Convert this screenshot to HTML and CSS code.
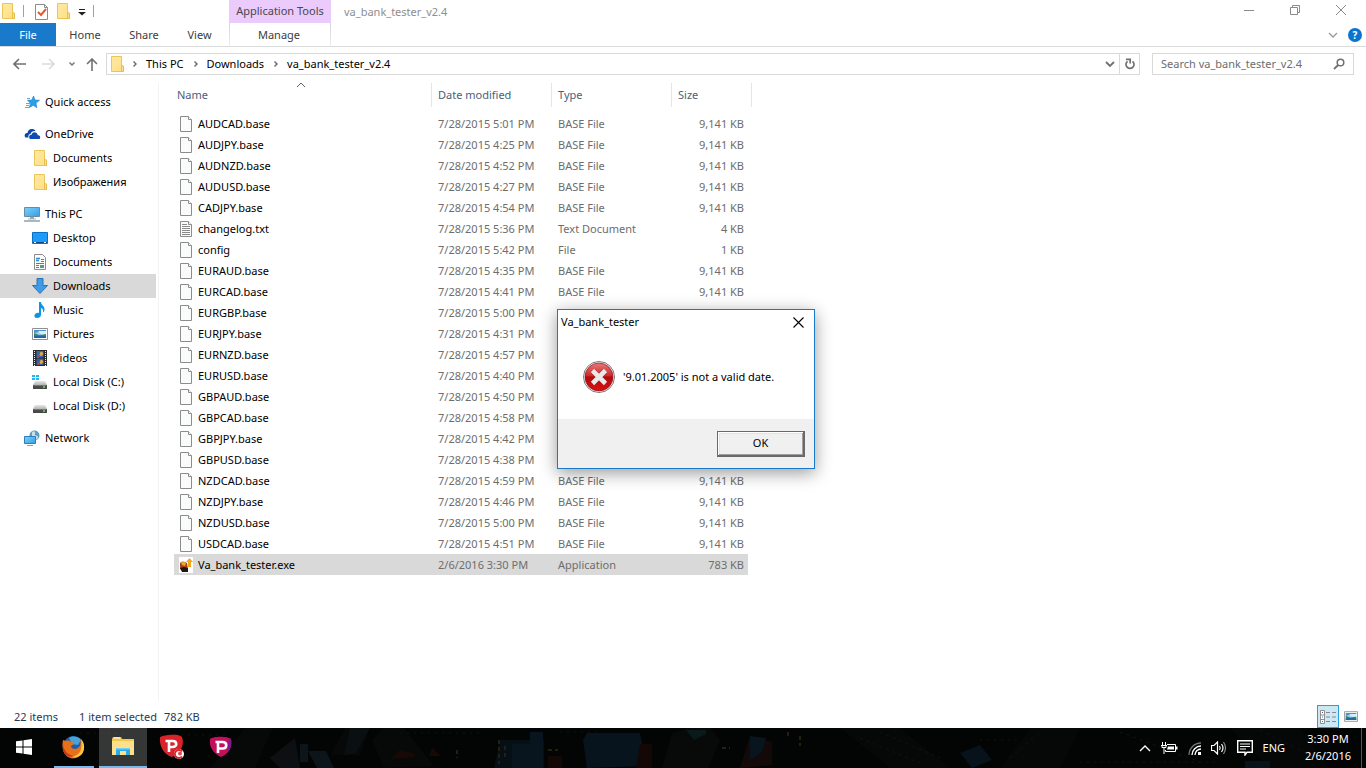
FILE: index.html
```html
<!DOCTYPE html>
<html lang="en">
<head>
<meta charset="utf-8">
<title>va_bank_tester_v2.4</title>
<link rel="stylesheet" href="styles.css">
</head>
<body>
<svg class="defs" aria-hidden="true">
  <defs>
    <linearGradient id="g-folder" x1="0" y1="0" x2="1" y2="1"><stop offset="0" stop-color="#ffe9a2"/><stop offset="1" stop-color="#ffdf85"/></linearGradient>
    <linearGradient id="g-screen" x1="0" y1="0" x2="1" y2="1"><stop offset="0" stop-color="#7fd0fb"/><stop offset="1" stop-color="#2f9fe6"/></linearGradient>
    <linearGradient id="g-red" x1="0" y1="0" x2="0" y2="1"><stop offset="0" stop-color="#e8797a"/><stop offset=".45" stop-color="#cf2a2c"/><stop offset=".5" stop-color="#b00b0e"/><stop offset="1" stop-color="#dd1114"/></linearGradient>
    <linearGradient id="g-disk" x1="0" y1="0" x2="0" y2="1"><stop offset="0" stop-color="#e6e6e6"/><stop offset="1" stop-color="#b5b5b5"/></linearGradient>
  </defs>
  <symbol id="folder" viewBox="0 0 16 18"><path d="M2.500 1.500h10v10h2v5h-12z" fill="url(#g-folder)" stroke="#eac65a"/><path d="M12.500 16.500v-5l1.500-1 .5 1v5z" fill="#ffe08a" stroke="#e5bd48"/></symbol>
  <symbol id="file" viewBox="0 0 14 16"><path d="M1.500.5h8l3 3v12h-11z" fill="#fafbfb" stroke="#8c8c8c"/><path d="M9.500.5v3h3" fill="#fff" stroke="#8c8c8c"/></symbol>
  <symbol id="textfile" viewBox="0 0 14 16"><path d="M1.500.5h8l3 3v12h-11z" fill="#fafbfb" stroke="#8c8c8c"/><path d="M3 3.500h5M3 5.500h8M3 7.500h8M3 9.500h8M3 11.500h8M3 13.500h8" stroke="#8a8a8a" fill="none"/><path d="M9.500.5v3h3" fill="#fff" stroke="#8c8c8c"/></symbol>
  <symbol id="chev" viewBox="0 0 6 8"><path d="M1.500 1.500L4 4 1.500 6.500" fill="none" stroke="#666" stroke-width="1.400"/></symbol>
  <symbol id="picture" viewBox="0 0 16 12"><path d="M.5.5h15v11H.5z" fill="#fff" stroke="#8f8f8f"/><path d="M2 2h12v8H2z" fill="#9fd4f5"/><path d="M2 2h12v1l-7 1-5 1z" fill="#4b8fd6"/><path d="M2 5l5 2 7-1v4H2z" fill="#3d8263"/><path d="M2 8h12v2H2z" fill="#1f69a8"/><path d="M6 3h8v3l-5 .5z" fill="#d8eefb"/></symbol>
  <symbol id="disk" viewBox="0 0 16 16"><path d="M3 7h10l2 4H1z" fill="url(#g-disk)"/><path d="M1 11h14v4H1z" fill="#4a4a4a"/><path d="M1.500 11.500h13" stroke="#777"/><circle cx="12" cy="13" r="1" fill="#6ee36a"/></symbol>
</svg>

<div class="window">
  <header class="titlebar">
    <div class="quick">
      <svg width="16" height="18"><use href="#folder"/></svg>
      <span class="vbar"></span>
      <button class="plain props" aria-label="Properties"><svg width="13" height="16" viewBox="0 0 13 16"><path d="M.5.5h9l3 3v12H.5z" fill="#fff" stroke="#8c8c8c"/><path d="M9.500.5v3h3" fill="none" stroke="#8c8c8c"/><path d="M3 8l3 3 5-6" fill="none" stroke="#e8592a" stroke-width="2"/></svg></button>
      <button class="plain" aria-label="New folder"><svg width="16" height="18"><use href="#folder"/></svg></button>
      <button class="plain custom" aria-label="Customize toolbar"><svg width="8" height="8" viewBox="0 0 8 8"><path d="M1 1.500h6" stroke="#222"/><path d="M0 4h8L4 7.500z" fill="#222"/></svg></button>
      <span class="vbar"></span>
    </div>
    <div class="context">Application Tools</div>
    <div class="title">va_bank_tester_v2.4</div>
    <div class="controls">
      <button class="plain" aria-label="Minimize"><svg width="10" height="10" viewBox="0 0 10 10"><path d="M0 5.500h10" stroke="#8a8a8a"/></svg></button>
      <button class="plain" aria-label="Restore"><svg width="10" height="10" viewBox="0 0 10 10"><path d="M.5 2.500h7v7h-7zM2.500 2.500v-2h7v7h-2" fill="none" stroke="#8a8a8a"/></svg></button>
      <button class="plain" aria-label="Close"><svg width="10" height="10" viewBox="0 0 10 10"><path d="M0 0l10 10M10 0L0 10" stroke="#8a8a8a"/></svg></button>
    </div>
  </header>

  <nav class="ribbon">
    <button class="tab file">File</button>
    <button class="tab home">Home</button>
    <button class="tab">Share</button>
    <button class="tab view">View</button>
    <button class="tab manage">Manage</button>
    <div class="ribbon-end">
      <button class="plain" aria-label="Expand the ribbon"><svg width="10" height="6" viewBox="0 0 10 6"><path d="M1 1l4 4 4-4" fill="none" stroke="#999" stroke-width="1.300"/></svg></button>
      <button class="help" aria-label="Help">?</button>
    </div>
  </nav>

  <div class="navbar">
    <button class="plain back" aria-label="Back"><svg width="13" height="12" viewBox="0 0 13 12"><path d="M6 1L1 6l5 5M1 6h12" fill="none" stroke="#707070" stroke-width="1.600"/></svg></button>
    <button class="plain forward" aria-label="Forward"><svg width="13" height="12" viewBox="0 0 13 12"><path d="M7 1l5 5-5 5M12 6H0" fill="none" stroke="#dcdcdc" stroke-width="1.600"/></svg></button>
    <button class="plain recent" aria-label="Recent locations"><svg width="8" height="6" viewBox="0 0 8 6"><path d="M1.500 1.500L4 4l2.500-2.500" fill="none" stroke="#777" stroke-width="1.500"/></svg></button>
    <button class="plain up" aria-label="Up"><svg width="12" height="13" viewBox="0 0 12 13"><path d="M1 6l5-5 5 5M6 1v12" fill="none" stroke="#707070" stroke-width="1.600"/></svg></button>
    <div class="address">
      <svg class="addr-folder" width="16" height="18"><use href="#folder"/></svg>
      <svg class="sep" width="6" height="8"><use href="#chev"/></svg>
      <button class="plain">This PC</button>
      <svg class="sep" width="6" height="8"><use href="#chev"/></svg>
      <button class="plain">Downloads</button>
      <svg class="sep" width="6" height="8"><use href="#chev"/></svg>
      <button class="plain">va_bank_tester_v2.4</button>
      <button class="plain drop" aria-label="Previous locations"><svg width="10" height="7" viewBox="0 0 10 7"><path d="M1 1l4 4 4-4" fill="none" stroke="#707070" stroke-width="1.800"/></svg></button>
      <button class="plain refresh" aria-label="Refresh"><svg width="12" height="12" viewBox="0 0 12 12"><path d="M8.500 3.300A4 4 0 1 1 3.500 3.300" fill="none" stroke="#707070" stroke-width="1.700"/><path d="M2 1.300h4.200v4.200" fill="none" stroke="#707070" stroke-width="1.700"/></svg></button>
    </div>
    <div class="search">
      <input type="search" placeholder="Search va_bank_tester_v2.4" aria-label="Search va_bank_tester_v2.4">
      <svg width="12" height="12" viewBox="0 0 12 12"><circle cx="7.500" cy="4.500" r="3.300" fill="none" stroke="#707070" stroke-width="1.500"/><path d="M5.200 7L1 11" stroke="#707070" stroke-width="1.800"/></svg>
    </div>
  </div>

  <main class="content">
    <aside class="tree">
      <ul>
        <li class="group"><svg width="16" height="16" viewBox="0 0 16 16"><path d="M9.500 2l1.500 4 4.500.3-3.500 2.800.8 4.600-3.600-2.400-3.900 2.400 1.200-4.500L3.500 6.300l4.300-.3z" fill="#2a9fe8" stroke="#1580cc" stroke-width=".6"/><path d="M3 4.500h3M2 9.500h4M2 11.500h3M1 13.500h4" stroke="#5aaee8"/></svg>Quick access</li>
      </ul>
      <ul>
        <li class="group"><svg width="17" height="12" viewBox="0 0 17 12"><path d="M1 9C0 6.500 1.500 5 3.500 5 4 2 6 .5 8.500 1c1.500 0 2.500 1 3 2C9 2.600 7 4 6.500 6 4.500 6 4 8 4.500 9.500H3C2 9.500 1.300 9.500 1 9z" fill="#0b4aa8"/><path d="M5.500 10.500C4.500 8.500 5.500 6.800 7.500 6.800 8 4.500 10.500 3.600 12.500 5c.8.600 1.200 1.500 1.200 2.300C16 7 17 9.500 15.500 11H7c-.8 0-1.200 0-1.500-.5z" fill="#0f4db3"/></svg>OneDrive</li>
        <li><svg width="16" height="18"><use href="#folder"/></svg>Documents</li>
        <li><svg width="16" height="18"><use href="#folder"/></svg>Изображения</li>
      </ul>
      <ul>
        <li class="group"><svg width="16" height="16" viewBox="0 0 16 16"><path d="M.5 1.500h15v9H.5z" fill="url(#g-screen)" stroke="#6c8ba0"/><path d="M6 11h4v2H6z" fill="#9aa9b3"/><path d="M4 13h8" stroke="#a9b8c2"/><path d="M0 15h16" stroke="#8ba2b3" stroke-width="1.500"/></svg>This PC</li>
        <li><svg width="16" height="12" viewBox="0 0 16 12"><path d="M.5.5h15v11H.5z" fill="#1e9bf8" stroke="#0b6fc4"/><path d="M1 10.500h14" stroke="#0c4c8a"/><path d="M2 10.500h2M12 10.500h2" stroke="#fff"/></svg>Desktop</li>
        <li><svg width="14" height="16" viewBox="0 0 14 16"><path d="M1.500.5h8l3 3v12h-11z" fill="#fafbfb" stroke="#8c8c8c"/><path d="M3 4.500h4M3 6.500h3" stroke="#2c8ed8" stroke-width="1.500"/><path d="M8 5.500h3M8 7.500h3M3 9.500h8M3 11.500h3M3 13.500h3" stroke="#777"/><path d="M7 11h4v3H7z" fill="#5d9a82"/></svg>Documents</li>
        <li class="selected"><svg width="16" height="16" viewBox="0 0 16 16"><path d="M5 .5h6v7h4.500L8 15.500.5 7.500H5z" fill="#3f9be8" stroke="#2774ba"/></svg>Downloads</li>
        <li><svg width="16" height="16" viewBox="0 0 16 16"><path d="M7 0h2c0 3 4 4 3.500 8-.3 1.500-1 2-1.500 2.500C11.500 7.500 10.500 6.500 9 6v7c0 2-2 3-4 3s-3-1.300-2.500-2.700C3 11.500 5 10.500 7 11z" fill="#0d94e6"/></svg>Music</li>
        <li><svg width="16" height="12"><use href="#picture"/></svg>Pictures</li>
        <li><svg width="14" height="16" viewBox="0 0 14 16"><path d="M0 0h14v16H0z" fill="#2b2b2b"/><path d="M3.500 1h7v6.500h-7z" fill="#3567b5"/><path d="M3.500 8.500h7V15h-7z" fill="#2f5fac"/><path d="M7 3c1-2 2-1 3 0s-1 3-2 3-2-1-1-3M7 11c1-2 2-1 3 0s-1 3-2 3-2-1-1-3" fill="#e4a53a"/><path d="M4 5l2 1v2H4zM4 12l2 1v2H4z" fill="#b3482c"/><path d="M1.500 1v15M12.500 1v15" stroke="#eee" stroke-dasharray="1 1"/></svg>Videos</li>
        <li><svg width="16" height="16" viewBox="0 0 16 16"><use href="#disk" width="16" height="16"/><path d="M0 1h3v2H0zM4 1h3v2H4zM0 4h3v2H0zM4 4h3v2H4z" fill="#22b5f0"/></svg>Local Disk (C:)</li>
        <li><svg width="16" height="16"><use href="#disk"/></svg>Local Disk (D:)</li>
      </ul>
      <ul>
        <li class="group"><svg width="16" height="16" viewBox="0 0 16 16"><circle cx="10.500" cy="5.500" r="5" fill="#5f9cc0"/><path d="M8 2c2-2 4 0 3 2s3 1 3 3-2 3-3 2-2-2-3-3z" fill="#c6e1e8"/><path d="M.5 6.500h11v7H.5z" fill="url(#g-screen)" stroke="#2d7eb4"/><path d="M3 15.500h6" stroke="#8ba2b3"/></svg>Network</li>
      </ul>
    </aside>

    <section class="files">
      <table>
        <colgroup><col class="c-name"><col class="c-date"><col class="c-type"><col class="c-size"><col class="c-edge"></colgroup>
        <thead><tr>
          <th><span>Name</span><svg class="sort" width="10" height="6" viewBox="0 0 10 6"><path d="M1 5l4-4 4 4" fill="none" stroke="#666"/></svg></th>
          <th><span>Date modified</span></th><th><span>Type</span></th><th colspan="2"><span>Size</span></th>
        </tr></thead>
        <tbody>
          <tr><td><svg width="14" height="16"><use href="#file"/></svg>AUDCAD.base</td><td>7/28/2015 5:01 PM</td><td>BASE File</td><td>9,141 KB</td></tr>
          <tr><td><svg width="14" height="16"><use href="#file"/></svg>AUDJPY.base</td><td>7/28/2015 4:25 PM</td><td>BASE File</td><td>9,141 KB</td></tr>
          <tr><td><svg width="14" height="16"><use href="#file"/></svg>AUDNZD.base</td><td>7/28/2015 4:52 PM</td><td>BASE File</td><td>9,141 KB</td></tr>
          <tr><td><svg width="14" height="16"><use href="#file"/></svg>AUDUSD.base</td><td>7/28/2015 4:27 PM</td><td>BASE File</td><td>9,141 KB</td></tr>
          <tr><td><svg width="14" height="16"><use href="#file"/></svg>CADJPY.base</td><td>7/28/2015 4:54 PM</td><td>BASE File</td><td>9,141 KB</td></tr>
          <tr><td><svg width="14" height="16"><use href="#textfile"/></svg>changelog.txt</td><td>7/28/2015 5:36 PM</td><td>Text Document</td><td>4 KB</td></tr>
          <tr><td><svg width="14" height="16"><use href="#file"/></svg>config</td><td>7/28/2015 5:42 PM</td><td>File</td><td>1 KB</td></tr>
          <tr><td><svg width="14" height="16"><use href="#file"/></svg>EURAUD.base</td><td>7/28/2015 4:35 PM</td><td>BASE File</td><td>9,141 KB</td></tr>
          <tr><td><svg width="14" height="16"><use href="#file"/></svg>EURCAD.base</td><td>7/28/2015 4:41 PM</td><td>BASE File</td><td>9,141 KB</td></tr>
          <tr><td><svg width="14" height="16"><use href="#file"/></svg>EURGBP.base</td><td>7/28/2015 5:00 PM</td><td>BASE File</td><td>9,141 KB</td></tr>
          <tr><td><svg width="14" height="16"><use href="#file"/></svg>EURJPY.base</td><td>7/28/2015 4:31 PM</td><td>BASE File</td><td>9,141 KB</td></tr>
          <tr><td><svg width="14" height="16"><use href="#file"/></svg>EURNZD.base</td><td>7/28/2015 4:57 PM</td><td>BASE File</td><td>9,141 KB</td></tr>
          <tr><td><svg width="14" height="16"><use href="#file"/></svg>EURUSD.base</td><td>7/28/2015 4:40 PM</td><td>BASE File</td><td>9,141 KB</td></tr>
          <tr><td><svg width="14" height="16"><use href="#file"/></svg>GBPAUD.base</td><td>7/28/2015 4:50 PM</td><td>BASE File</td><td>9,141 KB</td></tr>
          <tr><td><svg width="14" height="16"><use href="#file"/></svg>GBPCAD.base</td><td>7/28/2015 4:58 PM</td><td>BASE File</td><td>9,141 KB</td></tr>
          <tr><td><svg width="14" height="16"><use href="#file"/></svg>GBPJPY.base</td><td>7/28/2015 4:42 PM</td><td>BASE File</td><td>9,141 KB</td></tr>
          <tr><td><svg width="14" height="16"><use href="#file"/></svg>GBPUSD.base</td><td>7/28/2015 4:38 PM</td><td>BASE File</td><td>9,141 KB</td></tr>
          <tr><td><svg width="14" height="16"><use href="#file"/></svg>NZDCAD.base</td><td>7/28/2015 4:59 PM</td><td>BASE File</td><td>9,141 KB</td></tr>
          <tr><td><svg width="14" height="16"><use href="#file"/></svg>NZDJPY.base</td><td>7/28/2015 4:46 PM</td><td>BASE File</td><td>9,141 KB</td></tr>
          <tr><td><svg width="14" height="16"><use href="#file"/></svg>NZDUSD.base</td><td>7/28/2015 5:00 PM</td><td>BASE File</td><td>9,141 KB</td></tr>
          <tr><td><svg width="14" height="16"><use href="#file"/></svg>USDCAD.base</td><td>7/28/2015 4:51 PM</td><td>BASE File</td><td>9,141 KB</td></tr>
          <tr class="selected"><td><svg width="14" height="16" viewBox="0 0 14 16"><path d="M0 0h14v16H0z" fill="#fff"/><path d="M1 6c2-2 5-1 7 0l1 6-3 3-5-3z" fill="#a8441c"/><path d="M2 5c2-1 4 0 5 1l-1 3-3-1z" fill="#f0a03c"/><path d="M1 11l4-1 4 1v4H3z" fill="#231510"/><path d="M10.500 1L14 5h-2v5h-3V5H7z" fill="#f6a51c"/></svg>Va_bank_tester.exe</td><td>2/6/2016 3:30 PM</td><td>Application</td><td>783 KB</td></tr>
        </tbody>
      </table>
    </section>
  </main>

  <footer class="status">
    <span class="count">22 items</span><span class="sel">1 item selected</span><span class="size">782 KB</span>
    <div class="views">
      <button class="plain active" aria-label="Details view"><svg width="16" height="14" viewBox="0 0 16 14"><path d="M.5.5h4v13h-4zM.5 5h4M.5 9.500h4" fill="#fff" stroke="#8f8f8f"/><path d="M2 2.500h1" stroke="#555"/><path d="M2 7h1" stroke="#2b83d8"/><path d="M2 11.500h1" stroke="#d33"/><path d="M6 2.500h4M12 2.500h4M6 7h4M12 7h4M6 11.500h4M12 11.500h4" stroke="#888"/></svg></button>
      <button class="plain" aria-label="Large thumbnails"><svg width="14" height="11"><use href="#picture"/></svg></button>
    </div>
  </footer>
</div>

<div class="dialog" role="alertdialog" aria-labelledby="dlg-title" aria-describedby="dlg-text">
  <div class="dlg-head"><span id="dlg-title">Va_bank_tester</span><button class="plain" aria-label="Close"><svg width="11" height="11" viewBox="0 0 11 11"><path d="M.5.5l10 10M10.500.5l-10 10" stroke="#000" stroke-width="1.100"/></svg></button></div>
  <div class="dlg-body">
    <svg width="32" height="32" viewBox="0 0 32 32"><circle cx="16" cy="16" r="15.500" fill="#fff" stroke="#777"/><circle cx="16" cy="16" r="14" fill="url(#g-red)" stroke="#8f1214" stroke-width=".7"/><path d="M10 10l12 12M22 10L10 22" stroke="#9c1c1e" stroke-width="5.600"/><path d="M9.500 9.500l13 13M22.500 9.500l-13 13" stroke="#e9e9e9" stroke-width="4.600"/></svg>
    <p id="dlg-text">'9.01.2005' is not a valid date.</p>
  </div>
  <div class="dlg-foot"><button class="ok">OK</button></div>
</div>

<div class="taskbar">
  <svg class="city" viewBox="0 0 1366 40" preserveAspectRatio="xMidYMid slice" aria-hidden="true">
    <path d="M0 0h1366v40H0z" fill="#030404"/>
    <path d="M210 40l35-40h28l-18 40zM330 27l15-27h25l-10 27zM372 12l12-12h20l30 38-50 2z" fill="#070808"/>
    <path d="M300 16h8v18h-8zM308 23h18l8 17h-17z" fill="#0c151a"/>
    <path d="M350 0h20l-14 25-12 2z" fill="#0a0f12"/>
    <path d="M500 12h44v28h-50z" fill="#060f15"/>
    <path d="M583 12l4-7h53l7 33-60 2z" fill="#07141d"/>
    <path d="M512 16h18v24h-18zM530 4h13v36h-13z" fill="#08151e"/>
    <path d="M672 5l18-5h20l10 12-12 28h-46z" fill="#080a09"/>
    <path d="M686 2h20v4l-12 6z" fill="#081b1a"/>
    <path d="M740 40l10-32 22 6v23z" fill="#140909"/><path d="M750 8l16 2-4 14-12 8z" fill="#09151e"/>
    <path d="M640 16h12v24h-16zM548 28h14v12h-14z" fill="#130805"/>
    <path d="M400 22l15 4v3l-24 2zM432 20l9 8h-12z" fill="#180905"/>
    <path d="M499 12v24M505 18v14M457 22v8M548 22h10M722 20h8M800 8v10M788 4v6" stroke="#251f10" stroke-width="2" stroke-dasharray="4 3"/>
    <path d="M80 5h45M160 7h70M400 5h80M560 4h40M980 12h60M1080 34h140" stroke="#12100c" stroke-dasharray="2 5"/>
    <path d="M840 0l50 40h60L900 0zM1000 40l30-40h50l-20 40zM1230 0l40 40h60l-30-40z" fill="#060707"/>
    <path d="M270 30l25-20 5 30h-20z" fill="#0d1013"/>
    <path d="M860 10l60 25M880 4l60 26M1010 30l30-26M1120 4l80 30M1260 2l60 30" stroke="#101314" stroke-dasharray="3 4" fill="none"/>
    <path d="M1245 33h25v7h-25zM960 25l20-8 12 15-20 8z" fill="#07121a"/>
  </svg>
  <button class="task" aria-label="Start"><svg width="16" height="16" viewBox="0 0 16 16"><path d="M0 2.300L6.500 1.400V7.500H0zM7.500 1.200L16 0v7.500H7.500zM0 8.500h6.500v6.100L0 13.700zM7.500 8.500H16V16l-8.500-1.200z" fill="#fff"/></svg></button>
  <button class="task open" aria-label="Firefox"><svg width="24" height="24" viewBox="0 0 24 24"><circle cx="12.500" cy="11.500" r="10.500" fill="#1f5ea8"/><path d="M8 3c4-3 10-1 12 2l-3 5-6-1z" fill="#4aa3d8"/><path d="M2 5l3 1c2-1 4 0 5 1 2 0 3 1 3 2l-3 2c0 3 4 4 7 2 3-2 3-6 2-9 4 3 5 9 3 13-3 6-10 8-15 5S.5 12 2 5z" fill="#e8701a"/><path d="M20 4c4 4 4 11 1 15-3 3-7 4-11 3 6-1 9-4 10-8 .7-3 .7-7 0-10z" fill="#fbc63a"/><path d="M2 10c1 6 5 10 11 11-5 2-10-1-11-6z" fill="#c9371a"/></svg></button>
  <button class="task open current" aria-label="File Explorer"><svg width="24" height="22" viewBox="0 0 24 22"><path d="M1 3l1-2h8l1 2h12v16H1z" fill="#f4c64c"/><path d="M1 5h22v14H1z" fill="#fee08c"/><path d="M3 2h6" stroke="#fff"/><path d="M5 12h14v7h-4v-4H9v4H5z" fill="#2aabe8"/><path d="M5 12h14v1.500H5z" fill="#6fd0f7"/></svg></button>
  <button class="task" aria-label="Paltalk"><svg width="26" height="26" viewBox="0 0 26 26"><path d="M1 3c3-2 19-4 22 0 3 8-2 17-10 20C5 21 0 12 1 3z" fill="#d9232b"/><path d="M10 18V7h3.500c5 0 5 6 0 6H10M6.500 7H11" fill="none" stroke="#fff" stroke-width="2.600"/><circle cx="20" cy="20" r="5" fill="#fff"/><path d="M23 17.500a4 4 0 1 0 0 5" fill="none" stroke="#d9232b" stroke-width="1.800"/><circle cx="21" cy="19.500" r="2" fill="#e2484e"/></svg></button>
  <button class="task" aria-label="Pinned application"><svg width="24" height="24" viewBox="0 0 24 24"><path d="M1 4c3-3 18-3 21 0 2 9-3 15-10 18C4 18 0 12 1 4z" fill="#c40f5b"/><path d="M20 3l2 1c1 6-1 11-4 14z" fill="#7d1a8c"/><path d="M9 18V7h4.500c5 0 5 6.500 0 6.500H9M6.500 7H11" fill="none" stroke="#fff" stroke-width="2.600"/></svg></button>
  <div class="tray">
    <button class="plain" aria-label="Show hidden icons"><svg width="12" height="8" viewBox="0 0 12 8"><path d="M1 7l5-5 5 5" fill="none" stroke="#fff" stroke-width="1.400"/></svg></button>
    <svg width="17" height="12" viewBox="0 0 17 12"><path d="M6 2.500h8.500v7H4.500V8" fill="none" stroke="#fff"/><path d="M7 4.500h6v3H6z" fill="#fff"/><path d="M15 4.500h1.500v3H15" fill="#fff"/><path d="M1.500 0v3M4.500 0v3M0 3.500h6M1 4v1.500h4V4M3 5v7" stroke="#fff" fill="none"/></svg>
    <svg width="13" height="13" viewBox="0 0 13 13"><path d="M1 13A12 12 0 0 1 13 1" fill="none" stroke="#777" stroke-width="1.300"/><path d="M4 13a9 9 0 0 1 9-9M7 13a6 6 0 0 1 6-6" fill="none" stroke="#fff" stroke-width="1.400"/><path d="M10 13V10h3v3z" fill="#fff"/></svg>
    <svg width="16" height="14" viewBox="0 0 16 14"><path d="M.5 4.500H3L6.500 1v12L3 9.500H.5z" fill="none" stroke="#fff" stroke-width="1.200"/><path d="M8.500 5q1.500 2 0 4M10.500 3q3 4 0 8" fill="none" stroke="#fff" stroke-width="1.200"/><path d="M12.500 1q4 6 0 12" fill="none" stroke="#888" stroke-width="1.200"/></svg>
    <svg width="16" height="16" viewBox="0 0 16 16"><path d="M.7.700h14.600v11.600H10L8 15v-2.700H.7z" fill="none" stroke="#fff" stroke-width="1.400"/><path d="M3 4h10M3 6.500h10M3 9h6" stroke="#fff"/></svg>
    <button class="plain lang">ENG</button>
    <button class="plain clock"><span>3:30 PM</span><span>2/6/2016</span></button>
  </div>
</div>
</body>
</html>
```
FILE: styles.css
```css
* { box-sizing: border-box; }
body {
  margin: 0;
  height: 100vh;
  display: flex;
  flex-direction: column;
  position: relative;
  overflow: hidden;
  background: #fff;
  color: #000;
  font: 11px/16px "Noto Sans", "Open Sans", sans-serif;
}
button, input { font: inherit; color: inherit; }
svg { flex: none; display: block; }
.defs { position: absolute; width: 0; height: 0; }
.plain {
  display: flex; align-items: center; justify-content: center;
  border: 0; padding: 0; background: none; white-space: nowrap;
}
.window { flex: 1; min-height: 0; display: flex; flex-direction: column; }

.titlebar { display: flex; height: 23px; }
.quick { display: flex; align-items: center; width: 229px; padding-bottom: 1px; }
.vbar { width: 1px; height: 12px; background: #a0a0a0; margin-left: 7px; }
.props { margin: 2px 7px 0 11px; }
.custom { margin: 2px 0 0 7px; }
.custom + .vbar { margin-left: 7px; }
.context { width: 102px; text-align: center; background: #eacbfb; color: #4b4552; line-height: 21px; }
.title { padding-left: 13px; color: #8e8e8e; line-height: 24px; }
.controls { margin-left: auto; margin-right: 2px; display: flex; height: 20px; }
.controls .plain { width: 46px; }

.ribbon { display: flex; height: 24px; border-bottom: 1px solid #dadbdc; }
.tab { border: 0; background: none; padding: 0; width: 60px; color: #3c3c3c; }
.tab.file { width: 56px; background: #1979ca; color: #fff; }
.tab.home { width: 58px; }
.tab.view { width: 51px; }
.tab.manage {
  width: 102px; margin-left: 4px; padding-right: 2px;
  border: 1px solid; border-width: 0 1px;
  border-image: linear-gradient(#d5d5d5, #eee) 1;
}
.ribbon-end { margin-left: auto; display: flex; align-items: center; gap: 10px; padding-right: 4px; }
.help {
  width: 14px; height: 14px; border: 0; padding: 0; border-radius: 50%;
  background: #0a74d1; color: #fff; font-size: 10px; line-height: 14px; font-weight: bold;
}

.navbar { display: flex; align-items: center; height: 36px; padding: 0 12px 2px 13px; }
.forward { margin-left: 16px; }
.recent { margin-left: 13px; }
.up { margin-left: 10px; }
.back, .forward { width: 13px; }
.address { display: flex; align-items: center; flex: 1; height: 22px; margin: 0 12px 0 8px; border: 1px solid #d9d9d9; }
.address .plain { padding-bottom: 1px; }
.addr-folder { margin: 0 7px 0 2px; }
.sep { margin: 0 8px 0 0; }
.address .plain + .sep { margin-left: 9px; }
.address .drop { margin-left: auto; margin-right: 4px; height: 20px; padding: 0; }
.address .refresh { width: 20px; height: 20px; padding: 0; border-left: 1px solid #d9d9d9; }
.search { display: flex; align-items: center; width: 202px; height: 22px; border: 1px solid #d9d9d9; padding: 0 8px; }
.search input { flex: 1; min-width: 0; border: 0; padding: 0; outline: 0; background: none; }
.search input::placeholder { color: #6d6d6d; opacity: 1; }

.content { flex: 1; min-height: 0; display: flex; }
.tree { width: 159px; border-right: 1px solid #f3f3f3; padding-top: 7px; margin-bottom: 4px; }
.tree ul { list-style: none; margin: 0 2px 8px 0; padding: 0; }
.tree li { display: flex; align-items: center; height: 24px; padding-left: 32px; white-space: nowrap; }
.tree li svg { margin-right: 5px; }
.tree li svg[width="14"] { margin: 0 6px 0 1px; }
.tree .group { padding-left: 24px; }
.tree .group svg[width="17"] { margin-right: 4px; }
.tree .selected { background: #d9d9d9; }

.files { flex: 1; padding-left: 15px; }
table { width: 578px; table-layout: fixed; border-collapse: separate; border-spacing: 0; }
.c-name { width: 258px; }
.c-date, .c-type { width: 120px; }
.c-size { width: 76px; }
.c-edge { width: 4px; }
th { position: relative; padding: 0 0 6px; font-weight: normal; text-align: left; color: #4c607a; }
th span { display: block; height: 24px; line-height: 24px; padding-left: 6px; border-right: 1px solid #e5e5e5; }
th:first-child span { padding-left: 3px; }
.sort { position: absolute; top: -1px; left: 50%; margin-left: -7px; }
td { height: 21px; padding: 0 0 0 6px; color: #6d6d6d; white-space: nowrap; line-height: 16px; vertical-align: middle; }
td:first-child { padding-left: 5px; color: #000; }
td:nth-child(4) { text-align: right; padding-right: 4px; }
td svg { display: inline-block; vertical-align: top; margin-right: 5px; }
tbody .selected td { background: #d9d9d9; }

.status { display: flex; align-items: center; height: 23px; padding: 0 8px 0 14px; color: #1e395b; }
.sel { margin-left: 21px; }
.size { margin-left: 7px; }
.views { margin-left: auto; display: flex; gap: 5px; }
.views .plain { height: 23px; }
.views .active { width: 22px; background: #cce8f6; border: 1px solid #26a0da; }

.dialog {
  position: absolute; left: 557px; top: 309px; width: 258px;
  background: #fff; border: 1px solid #1979ca;
  box-shadow: 0 4px 16px rgba(0, 0, 0, .4);
}
.dlg-head { display: flex; align-items: center; justify-content: space-between; height: 24px; padding: 0 10px 0 3px; }
.dlg-body { display: flex; align-items: center; gap: 8px; height: 85px; padding-left: 25px; }
.dlg-body p { margin: 0; }
.dlg-foot { display: flex; justify-content: flex-end; align-items: center; height: 49px; padding-right: 9px; background: #f0f0f0; }
.ok {
  width: 88px; height: 26px; padding: 0; background: #f0f0f0;
  border: 1px solid #696969; border-width: 1px 2px 2px 1px;
  box-shadow: inset 1px 1px #fff, inset -1px -1px #a0a0a0, inset 2px 2px #e3e3e3;
}

.taskbar { position: relative; display: flex; height: 40px; background: #030404; color: #fff; }
.city { position: absolute; left: 0; top: 0; width: 100%; height: 100%; }
.task {
  position: relative; display: flex; align-items: center; justify-content: center;
  width: 48px; margin-right: 1px; padding: 0; border: 0; border-bottom: 2px solid transparent; background: none;
}
.task.open::after { content: ""; position: absolute; left: 5px; right: 3px; bottom: -2px; height: 2px; background: #76b9ed; }
.task.current { margin-left: 1px; background: rgba(255, 255, 255, .2); background-clip: border-box; }
.task.current::after { left: 0; right: 0; }
.tray {
  position: relative; margin-left: auto; margin-right: 4px; padding-right: 6px;
  display: flex; align-items: center; gap: 10px; border-right: 1px solid #555;
}
.lang { margin-right: 6px; }
.clock { flex-direction: column; width: 54px; line-height: 17px; padding-bottom: 2px; }
```
